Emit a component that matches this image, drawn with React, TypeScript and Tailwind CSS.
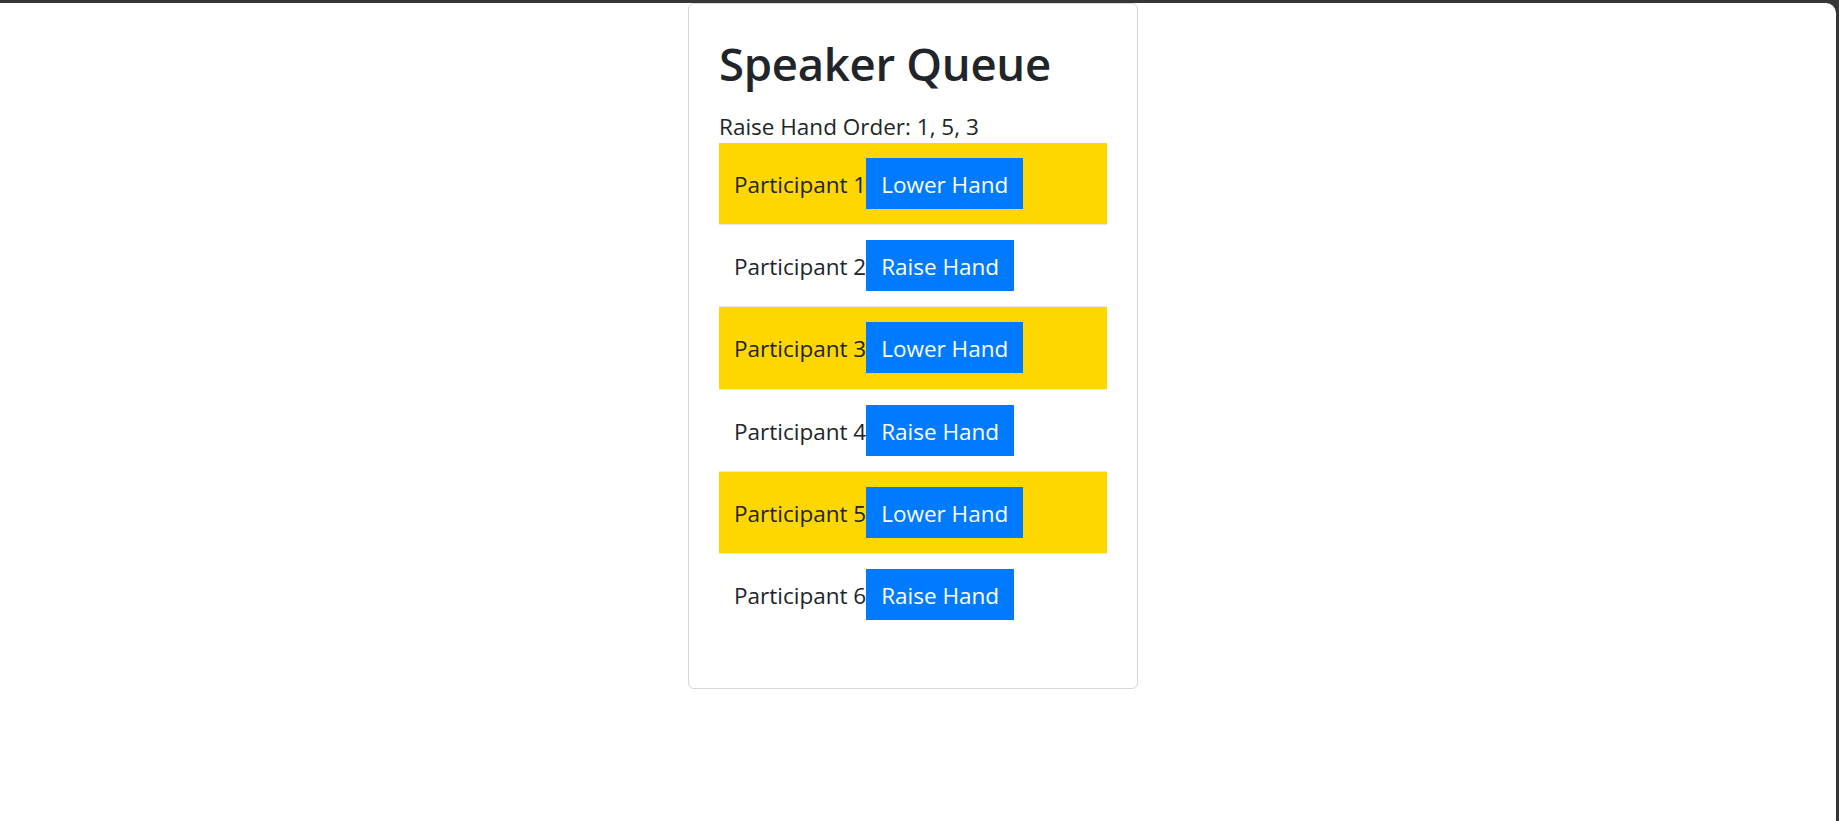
import { useState } from "react";

const participants = [1, 2, 3, 4, 5, 6];

const App = () => {
  const [queue, setQueue] = useState<number[]>([1, 5, 3]);

  const toggleHand = (id: number) => {
    setQueue((prev) =>
      prev.includes(id) ? prev.filter((p) => p !== id) : [...prev, id]
    );
  };

  return (
    <div className="h-[821px] bg-[#363636] pt-[3px] pr-[3px] overflow-hidden">
      <div
        className="h-full bg-white rounded-tr-[10px] text-[#212529]"
        style={{ fontFamily: '"Open Sans", "Noto Sans", sans-serif' }}
      >
        <div className="ml-[688px] w-[450px] border border-[#d6d6d6] rounded-[6px] px-[30px] pt-[30px] pb-[53px]">
          <h1 className="text-[45.5px] font-semibold leading-[56px] pt-[1px] mb-[16px] tracking-[-0.3px]">
            Speaker Queue
          </h1>
          <p className="text-[22.5px] leading-[33px] pt-[3px]">
            Raise Hand Order: {queue.join(", ")}
          </p>
          <ul>
            {participants.map((id) => {
              const raised = queue.includes(id);
              return (
                <li
                  key={id}
                  className={`flex items-baseline px-[15px] py-[15.1px] border-b last:border-b-0 border-[#e6e6e6] text-[22.5px] leading-[36px] ${
                    raised ? "bg-[#ffd700]" : "bg-white"
                  }`}
                >
                  <span>Participant {id}</span>
                  <button
                    onClick={() => toggleHand(id)}
                    className="bg-[#007bff] text-white px-[15px] pt-[9px] pb-[6px] leading-[36px]"
                  >
                    {raised ? "Lower Hand" : "Raise Hand"}
                  </button>
                </li>
              );
            })}
          </ul>
        </div>
      </div>
    </div>
  );
};

export default App;
